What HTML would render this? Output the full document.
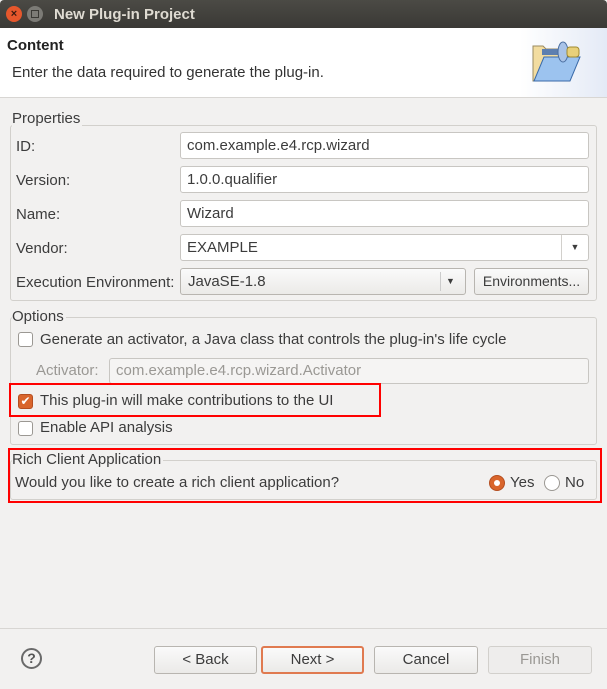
<!DOCTYPE html><html><head><style>
*{box-sizing:border-box;margin:0;padding:0}
body{width:607px;height:689px;background:#f2f1f0;font-family:"Liberation Sans",sans-serif;font-size:15px;color:#3c3c3c;position:relative;overflow:hidden}
.a{position:absolute;white-space:nowrap;line-height:17px}
.tb{background:#fff;border:1px solid #c8c6c2;border-radius:3px;padding:0 6px;line-height:25px}
.grp{border:1px solid #d2d0cc;border-radius:3px}
.btn{border:1px solid #b8b5b0;border-radius:3px;background:linear-gradient(#fafafa,#ebeae8);text-align:center;line-height:25px}
.cb{width:15px;height:15px;border:1px solid #9b9893;border-radius:3px;background:#fff}
</style></head><body>
<div class="a" style="left:0;top:0;width:607px;height:28px;background:linear-gradient(#4b4a45,#3a3935);border-radius:4px 4px 0 0"></div>
<div class="a" style="left:6px;top:6px;width:16px;height:16px;border-radius:50%;background:#e6572c;color:#3a1a10;font-size:11px;text-align:center;line-height:16px;font-weight:bold">×</div>
<div class="a" style="left:27px;top:6px;width:16px;height:16px;border-radius:50%;background:#7c7b76"><div style="margin:4px;width:8px;height:8px;border:1px solid #3a3935"></div></div>
<div class="a" style="left:54px;top:6px;color:#dfdbd2;font-weight:bold;font-size:15px">New Plug-in Project</div>
<div class="a" style="left:0;top:28px;width:607px;height:70px;background:#fff;border-bottom:1px solid #d8d6d3"></div>
<div class="a" style="left:520px;top:28px;width:87px;height:69px;background:linear-gradient(90deg,#fff,#e4eaf6)"></div>
<svg class="a" style="left:530px;top:36px" width="56" height="50" viewBox="0 0 56 50"><path d="M3 10h10l3 3h20v32H3z" fill="#f2dca0" stroke="#9a8a60"/><path d="M4 45l10-24h36l-10 24z" fill="#9cc3ef" stroke="#3a6aa8"/><rect x="12" y="13" width="18" height="6" fill="#5d7fb0"/><ellipse cx="33" cy="16" rx="5" ry="10" fill="#a9c3e8" stroke="#4a6ea0"/><rect x="37" y="11" width="12" height="10" rx="3" fill="#e8d07a" stroke="#a08a30"/></svg>
<div class="a" style="left:7px;top:37px;font-weight:bold;color:#222">Content</div>
<div class="a" style="left:12px;top:64px;color:#333">Enter the data required to generate the plug-in.</div>
<div class="grp a" style="left:10px;top:125px;width:587px;height:176px"></div>
<div class="a" style="left:12px;top:110px;background:#f2f1f0;padding-right:2px">Properties</div>
<div class="a" style="left:16px;top:138px">ID:</div>
<div class="a tb" style="left:180px;top:132px;width:409px;height:27px">com.example.e4.rcp.wizard</div>
<div class="a" style="left:16px;top:172px">Version:</div>
<div class="a tb" style="left:180px;top:166px;width:409px;height:27px">1.0.0.qualifier</div>
<div class="a" style="left:16px;top:206px">Name:</div>
<div class="a tb" style="left:180px;top:200px;width:409px;height:27px">Wizard</div>
<div class="a" style="left:16px;top:240px">Vendor:</div>
<div class="a tb" style="left:180px;top:234px;width:409px;height:27px">EXAMPLE</div>
<div class="a" style="left:561px;top:235px;width:27px;height:25px;border-left:1px solid #d2d0cc;text-align:center;font-size:9px;line-height:25px">▼</div>
<div class="a" style="left:16px;top:274px">Execution Environment:</div>
<div class="a btn" style="left:180px;top:268px;width:286px;height:27px;text-align:left;padding-left:7px">JavaSE-1.8</div>
<div class="a" style="left:440px;top:272px;width:1px;height:19px;background:#ccc"></div>
<div class="a" style="left:446px;top:273px;font-size:9px">▼</div>
<div class="a btn" style="left:474px;top:268px;width:115px;height:27px;font-size:14px">Environments...</div>
<div class="grp a" style="left:10px;top:317px;width:587px;height:128px"></div>
<div class="a" style="left:12px;top:308px;background:#f2f1f0;padding-right:2px">Options</div>
<div class="a cb" style="left:18px;top:332px"></div>
<div class="a" style="left:40px;top:331px">Generate an activator, a Java class that controls the plug-in's life cycle</div>
<div class="a" style="left:36px;top:362px;color:#9a9894">Activator:</div>
<div class="a tb" style="left:109px;top:358px;width:480px;height:26px;background:#f5f4f3;color:#9a9894;line-height:24px">com.example.e4.rcp.wizard.Activator</div>
<div class="a" style="left:9px;top:383px;width:372px;height:34px;border:2px solid #f00"></div>
<div class="a cb" style="left:18px;top:394px;background:#d9652c;border-color:#b54e20;color:#fff;font-size:12px;line-height:13px;text-align:center">✔</div>
<div class="a" style="left:40px;top:392px">This plug-in will make contributions to the UI</div>
<div class="a cb" style="left:18px;top:421px"></div>
<div class="a" style="left:40px;top:419px">Enable API analysis</div>
<div class="a" style="left:8px;top:448px;width:594px;height:55px;border:2px solid #f00"></div>
<div class="grp a" style="left:10px;top:460px;width:587px;height:40px"></div>
<div class="a" style="left:12px;top:451px;background:#f2f1f0;padding-right:2px">Rich Client Application</div>
<div class="a" style="left:15px;top:474px">Would you like to create a rich client application?</div>
<div class="a" style="left:489px;top:475px;width:16px;height:16px;border-radius:50%;background:#d9652c;border:1px solid #b54e20"><div style="margin:4px;width:6px;height:6px;border-radius:50%;background:#fff"></div></div>
<div class="a" style="left:510px;top:474px">Yes</div>
<div class="a" style="left:544px;top:475px;width:16px;height:16px;border-radius:50%;background:#fff;border:1px solid #9b9893"></div>
<div class="a" style="left:565px;top:474px">No</div>
<div class="a" style="left:0;top:628px;width:607px;height:1px;background:#d8d6d3"></div>
<div class="a" style="left:21px;top:648px;width:21px;height:21px;border-radius:50%;border:2px solid #6a6a6a;text-align:center;font-weight:bold;font-size:14px;line-height:17px;color:#555">?</div>
<div class="a btn" style="left:154px;top:646px;width:103px;height:28px">&lt; Back</div>
<div class="a btn" style="left:261px;top:646px;width:103px;height:28px;border:2px solid #e07a50;line-height:24px">Next &gt;</div>
<div class="a btn" style="left:374px;top:646px;width:104px;height:28px">Cancel</div>
<div class="a btn" style="left:488px;top:646px;width:104px;height:28px;background:#eeedec;border-color:#d2d0cc;color:#9a9894">Finish</div>
</body></html>
